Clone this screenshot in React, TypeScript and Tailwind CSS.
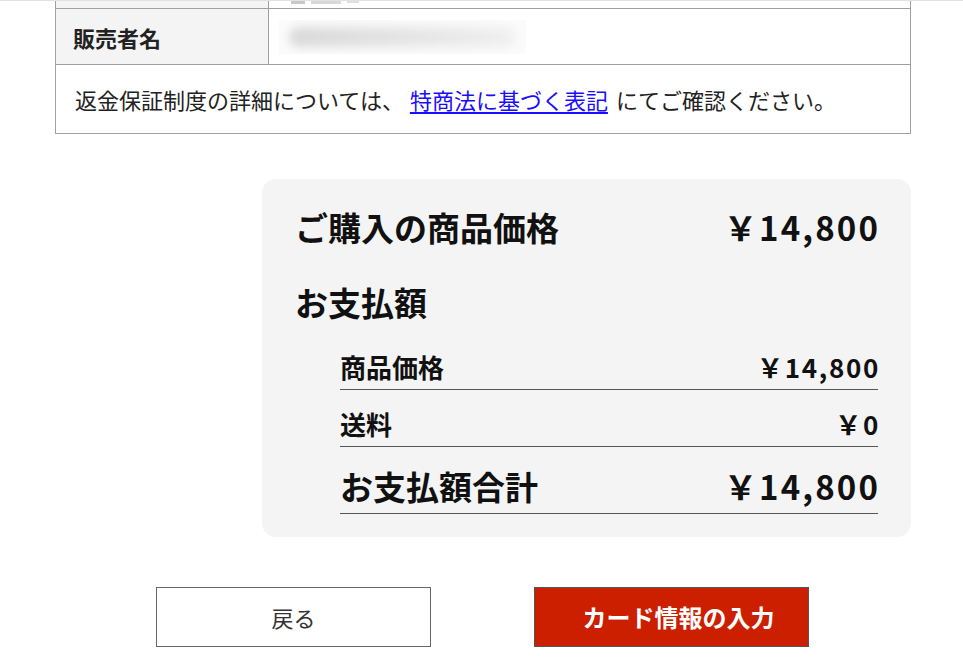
import React from "react";

const jp = { fontFamily: '"Noto Sans CJK JP", "Noto Sans", sans-serif' };

export default function App() {
  return (
    <div className="min-h-[671px] w-[963px] bg-white text-[#222]" style={jp}>
      <div className="h-px w-full bg-[#e2e2e2]" />
      <div className="ml-[55px] w-[856px]">
        {/* table */}
        <div className="border-x border-b border-[#a0a0a0]">
          <div className="flex h-[8px] overflow-hidden border-b border-[#a0a0a0]">
            <div className="w-[213px] shrink-0 border-r border-[#a0a0a0] bg-[#f4f4f4]" />
            <div className="flex flex-1 items-start gap-[6px] pl-[22px]">
              <div className="h-[3px] w-[14px] bg-[#c8c8c8] blur-[0.5px]" />
              <div className="h-[3px] w-[30px] bg-[#d8d8d8] blur-[0.5px]" />
              <div className="h-[2px] w-[12px] bg-[#e0e0e0] blur-[0.5px]" />
            </div>
          </div>
          <div className="flex h-[56px] border-b border-[#a0a0a0]">
            <div className="flex w-[213px] shrink-0 items-center border-r border-[#a0a0a0] bg-[#f4f4f4] pl-[17px] text-[22px] font-bold leading-none">
              販売者名
            </div>
            <div className="flex flex-1 items-center pl-[10px]">
              <div className="relative h-[34px] w-[247px] overflow-hidden bg-[#fbfbfb]">
                <div className="absolute inset-x-[10px] inset-y-[7px] rounded-full bg-gradient-to-r from-[#d9d9d9] via-[#e4e4e4] to-[#f0f0f0] blur-[5px]" />
              </div>
            </div>
          </div>
          <div className="flex h-[68px] items-center pl-[19px] text-[22px] leading-none">
            <span>返金保証制度の詳細については、</span>
            <span className="w-[6px]" />
            <a href="#" className="text-[#1a0dff] underline underline-offset-[3px]">
              特商法に基づく表記
            </a>
            <span className="w-[8px]" />
            <span>にてご確認ください。</span>
          </div>
        </div>

        {/* summary card */}
        <div className="ml-auto mt-[45px] w-[649px] rounded-[14px] bg-[#f4f4f4] px-[33px] pb-[23px] pt-[32px] text-[#111]">
          <div className="flex items-center justify-between text-[33px] font-bold leading-[33px]">
            <span>ご購入の商品価格</span>
            <span className="tracking-[0.065em] -mr-[2px]">￥14,800</span>
          </div>
          <div className="mt-[42px] text-[33px] font-bold leading-[33px]">お支払額</div>
          <div className="ml-[45px] mt-[14px]">
            <div className="flex items-center justify-between border-b border-[#555] pb-[9px] pt-[21px] text-[26px] font-bold leading-[26px]">
              <span>商品価格</span>
              <span className="tracking-[0.065em] -mr-[2px]">￥14,800</span>
            </div>
            <div className="flex items-center justify-between border-b border-[#555] pb-[9px] pt-[21px] text-[26px] font-bold leading-[26px]">
              <span>送料</span>
              <span className="tracking-[0.065em] -mr-[2px]">￥0</span>
            </div>
            <div className="flex items-center justify-between border-b border-[#555] pb-[10px] pt-[23px] text-[33px] font-bold leading-[33px]">
              <span>お支払額合計</span>
              <span className="tracking-[0.065em] -mr-[2px]">￥14,800</span>
            </div>
          </div>
        </div>
      </div>

      {/* buttons */}
      <div className="mt-[50px] flex justify-center gap-[103px] pl-[2px]">
        <button className="flex h-[60px] w-[275px] items-center justify-center border border-[#666] bg-white text-[22px] text-[#333]">
          戻る
        </button>
        <button className="flex h-[60px] w-[275px] items-center justify-center border border-[#555] bg-[#cc1f00] pl-[14px] text-[24px] font-bold text-white">
          カード情報の入力
        </button>
      </div>
    </div>
  );
}
